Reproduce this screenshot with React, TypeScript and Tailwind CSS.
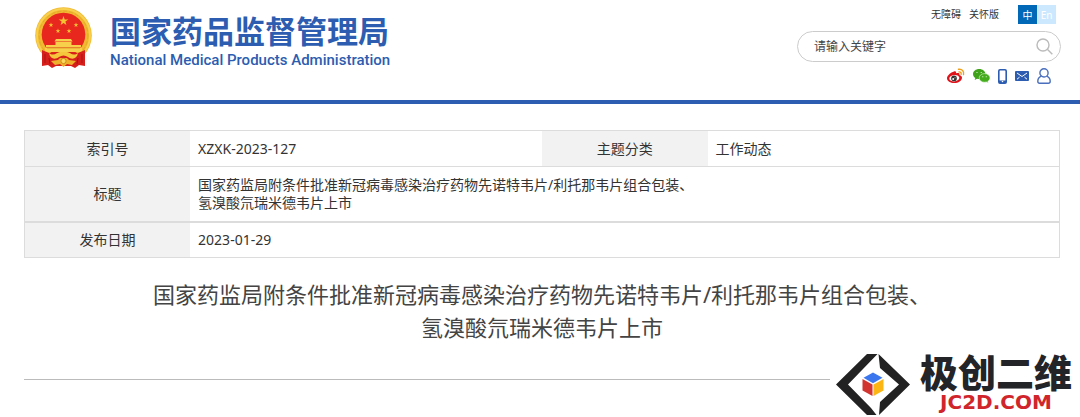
import { useState } from "react";
import type { ReactNode } from "react";
import clsx from "clsx";

const cnFont = "font-['Noto_Sans','Noto_Sans_CJK_SC',sans-serif]";

const STAR = "M0-5 1.2-1.6 4.8-1.5 1.9.6 2.9 4 0 2-2.9 4-1.9.6-4.8-1.5-1.2-1.6Z";

function Emblem() {
  const stars = [
    { x: 16, y: 18 },
    { x: 23, y: 24 },
    { x: 34, y: 24 },
    { x: 41, y: 18 },
  ];
  return (
    <svg viewBox="0 0 57 61" className="h-[61px] w-[57px] shrink-0" aria-hidden="true">
      <circle cx="28.5" cy="28.5" r="28.3" fill="#f0b92f" />
      <circle cx="28.5" cy="28.5" r="26.5" fill="none" stroke="#f8d04e" strokeWidth="2" />
      <circle cx="28.5" cy="28.5" r="24.4" fill="none" stroke="#e5aa2b" strokeWidth="1" strokeDasharray="4 2" />
      <circle cx="28.5" cy="27.5" r="21.8" fill="#e8281e" />
      <path d={STAR} transform="translate(28.5 14)" fill="#f6c433" />
      {stars.map((s) => (
        <path key={s.x} d={STAR} transform={`translate(${s.x} ${s.y}) scale(.5)`} fill="#f6c433" />
      ))}
      {/* gate tower */}
      <path d="M21 32h15l1.5 2.5h-18zM20.5 35h16v3h-16zM11 38h35v2.5H11zM10 41h37v4H10z" fill="#f7cf4b" />
      <path d="M12 41h33" stroke="#d9901f" strokeWidth=".7" />
      {/* red drape */}
      <path d="M7 43v16l6-1 4 3 4-2h15l4 2 4-3 6 1V43l-7 3-7-1H22l-8 1Z" fill="#d61f1b" />
      <path d="M10 47v9M14 51l1 6M43 51l-1 6M47 47v9" stroke="#a91414" strokeWidth="1" />
      <path d="M14 46c5 4 8-1 11-1h7c3 0 6 5 11 1-1 6-6 7-10 4-3-2-6-2-9 0-4 3-9 2-10-4Z" fill="#f5c53c" />
      <path d="m16 54 7-1 2-2h7l2 2 7 1-4 4-5-1-3.500 3-3.500-3-5 1Z" fill="#eeb02b" />
      <circle cx="28.5" cy="54" r="2.6" fill="#f9d85c" stroke="#c97d17" strokeWidth=".8" />
    </svg>
  );
}

function WeiboIcon() {
  return (
    <svg viewBox="0 0 18 16" className="h-4 w-[18px]">
      <path d="M7 3.500c1.500-.6 2.500 0 2 1.800 2-.8 4-.5 3.400 1.600 1.500.4 2.600 1.400 2.600 2.800C15 12.700 11.300 15 7.300 15 3.300 15 0 13.100 0 10.200 0 7.500 3.800 4.500 7 3.500Z" fill="#e1131a" />
      <ellipse cx="7.300" cy="10.200" rx="5" ry="3.200" transform="rotate(-6 7.300 10.200)" fill="#fff" />
      <circle cx="7" cy="10.400" r="2.800" fill="#333" />
      <circle cx="6.200" cy="11" r="1" fill="#fff" />
      <circle cx="8" cy="9.700" r=".5" fill="#fff" />
      <path d="M11.500 1.300c3.500-.6 5.800 2 5 5.300M12 3.900c1.600-.2 2.500.8 2.100 2.300" fill="none" stroke="#f0a11c" strokeWidth="1.400" strokeLinecap="round" />
    </svg>
  );
}

function WechatIcon() {
  return (
    <svg viewBox="0 0 17 15" className="h-[15px] w-[17px]">
      <path d="M6.200 0C2.800 0 0 2.200 0 5c0 1.600.9 3 2.300 3.900L1.700 11l2.400-1.200c.7.200 1.400.2 2.100.2C9.600 10 12.400 7.800 12.400 5S9.600 0 6.200 0Z" fill="#3fa31a" />
      <path d="M11.500 4.600c-3 0-5.300 1.900-5.300 4.300s2.300 4.300 5.300 4.300c.6 0 1.200-.1 1.800-.3l2 1.100-.5-1.800c1.300-.8 2.200-2 2.200-3.300 0-2.400-2.500-4.300-5.500-4.300Z" fill="#45ad1d" stroke="#fff" strokeWidth=".5" />
      <path d="M4 3.500h.01M8.200 3.500h.01M9.800 7.800h.01M13.200 7.800h.01" stroke="#fff" strokeWidth="1.100" strokeLinecap="round" />
    </svg>
  );
}

function PhoneIcon() {
  return (
    <svg viewBox="0 0 9 15" className="h-[15px] w-[9px]">
      <rect x=".8" y=".8" width="7.400" height="13.400" rx="1.200" fill="#fff" stroke="#2c5db0" strokeWidth="1.600" />
      <path d="M1 11.500h7V14H1z" fill="#2c5db0" />
      <circle cx="4.500" cy="12.500" r=".8" fill="#fff" />
    </svg>
  );
}

function MailIcon() {
  return (
    <svg viewBox="0 0 14 10" className="h-[10px] w-[14px]">
      <rect width="14" height="10" rx="1" fill="#2c5db0" />
      <path d="m2 2 5 3.500L12 2M2 8.200l2.500-2M12 8.200l-2.500-2" fill="none" stroke="#fff" strokeWidth="1" />
    </svg>
  );
}

function UserIcon() {
  return (
    <svg viewBox="0 0 14 16" className="h-4 w-[14px]" fill="none" stroke="#4a6fbd" strokeWidth="1.400">
      <circle cx="7" cy="4.900" r="4.100" />
      <path d="M4.300 8.200C1.900 9.200.8 10.900.8 13.200c0 1.400.6 2 1.800 2h8.800c1.200 0 1.800-.6 1.800-2 0-2.300-1.100-4-3.500-5" strokeLinejoin="round" />
    </svg>
  );
}

function CubeLogo() {
  return (
    <svg viewBox="0 0 74 61" className="h-[61px] w-[74px] shrink-0" aria-hidden="true">
      <path d="M31 0h10.500L12 30.500 35 54l5.500 7H31L0 30.500Z" fill="#222" />
      <path d="M42.500 0 74 30.500 43 61l1-13 19-17.500L44 14Z" fill="#222" />
      <path d="m37 18.500 9.500 5.200-9.500 5.500-9.500-5.500Z" fill="#3c76ef" />
      <path d="m26.500 25 10 5.500v11.500l-10-5.500Z" fill="#d2352f" />
      <path d="m47.500 25-10 5.500V42l10-5.500Z" fill="#fbb616" />
    </svg>
  );
}

const socials: { label: string; icon: ReactNode }[] = [
  { label: "微博", icon: <WeiboIcon /> },
  { label: "微信", icon: <WechatIcon /> },
  { label: "手机", icon: <PhoneIcon /> },
  { label: "邮箱", icon: <MailIcon /> },
  { label: "用户", icon: <UserIcon /> },
];

function Header() {
  const [query, setQuery] = useState("");
  const [lang, setLang]   = useState<"zh" | "en">("zh");

  const langCls = (active: boolean) =>
    clsx("h-[19px] w-[19px] cursor-pointer text-[10px] leading-none text-white", active ? "bg-[#0068b7]" : "bg-[#cce8ff]");

  return (
    <header className="flex h-[104px] items-start justify-between border-b-4 border-[#2c5db0] pr-[19px] pl-[35px]">
      <a href="#" className="flex gap-[18px] pt-[7px] text-[#2c5db0]">
        <Emblem />
        <span className="flex flex-col pt-1">
          <span className="text-[31px] leading-10 font-bold">国家药品监督管理局</span>
          <span className="font-['Roboto',sans-serif] text-[15px] leading-[18px] font-medium">
            National Medical Products Administration
          </span>
        </span>
      </a>

      <div className="flex w-[264px] flex-col items-end pt-[5px]">
        <div className="flex items-center pr-[5px] text-[10px] text-[#333]">
          <a href="#" className="mr-2">无障碍</a>
          <a href="#" className="mr-[19px]">关怀版</a>
          <button type="button" onClick={() => setLang("zh")} className={langCls(lang === "zh")}>中</button>
          <button type="button" onClick={() => setLang("en")} className={langCls(lang === "en")}>En</button>
        </div>

        <form
          onSubmit={(e) => e.preventDefault()}
          className="mt-[7px] flex h-[31px] w-full items-center rounded-full border border-[#ccc] pr-[7px] pl-4"
        >
          <input
            aria-label="搜索"
            value={query}
            onChange={(e) => setQuery(e.target.value)}
            placeholder="请输入关键字"
            className="min-w-0 flex-1 bg-transparent text-xs text-[#333] outline-none placeholder:text-[#444]"
          />
          <button type="submit" aria-label="搜索" className="cursor-pointer">
            <svg viewBox="0 0 17 17" className="size-[17px]" fill="none" stroke="#bbb" strokeWidth="1.400">
              <circle cx="7" cy="7" r="6" />
              <path d="m11.300 11.300 5 5" />
            </svg>
          </button>
        </form>

        <nav className="mt-1.5 flex items-center gap-2 pr-2.5">
          {socials.map((s) => (
            <a key={s.label} href="#" aria-label={s.label}>
              {s.icon}
            </a>
          ))}
        </nav>
      </div>
    </header>
  );
}

const thCls = "bg-[#f2f2f2] text-center font-normal";
const tdCls = "px-2";

function InfoTable() {
  return (
    <table className="w-full table-fixed border-collapse border border-[#dcdcdc] text-sm leading-[18px] text-[#333]">
      <colgroup>
        <col className="w-[16%]" />
        <col className="w-[34%]" />
        <col className="w-[16%]" />
        <col className="w-[34%]" />
      </colgroup>
      <tbody>
        <tr className="h-9 border-b border-[#dcdcdc]">
          <th scope="row" className={thCls}>索引号</th>
          <td className={tdCls}>XZXK-2023-127</td>
          <th scope="row" className={thCls}>主题分类</th>
          <td className={tdCls}>工作动态</td>
        </tr>
        <tr className="h-[55px] border-b-2 border-[#dcdcdc]">
          <th scope="row" className={thCls}>标题</th>
          <td colSpan={3} className={tdCls}>
            国家药监局附条件批准新冠病毒感染治疗药物先诺特韦片/利托那韦片组合包装、
            <br />
            氢溴酸氘瑞米德韦片上市
          </td>
        </tr>
        <tr className="h-9">
          <th scope="row" className={thCls}>发布日期</th>
          <td colSpan={3} className={tdCls}>2023-01-29</td>
        </tr>
      </tbody>
    </table>
  );
}

export default function App() {
  return (
    <div className={`bg-white ${cnFont}`} lang="zh-CN">
      <Header />

      <main className="pt-[26px] pr-5 pl-6">
        <InfoTable />
        <h1 className="mt-5 text-center text-[22px] leading-[33px] text-[#444]">
          国家药监局附条件批准新冠病毒感染治疗药物先诺特韦片/利托那韦片组合包装、
          <br />
          氢溴酸氘瑞米德韦片上市
        </h1>
      </main>

      <footer className="mt-2.5 flex items-start pr-2 pl-6">
        <hr className="mt-[25px] mr-1.5 flex-1 border-[#bbb]" />
        <CubeLogo />
        <div className="ml-2.5 flex flex-col items-center">
          <span className="font-['Noto_Sans_CJK_SC',sans-serif] text-[38px] leading-[34px] font-black text-[#222428]">
            极创二维
          </span>
          <span className="font-['DejaVu_Sans',sans-serif] text-[20px] leading-[28px] font-bold text-[#d0262b]">
            JC2D.COM
          </span>
        </div>
      </footer>
    </div>
  );
}
